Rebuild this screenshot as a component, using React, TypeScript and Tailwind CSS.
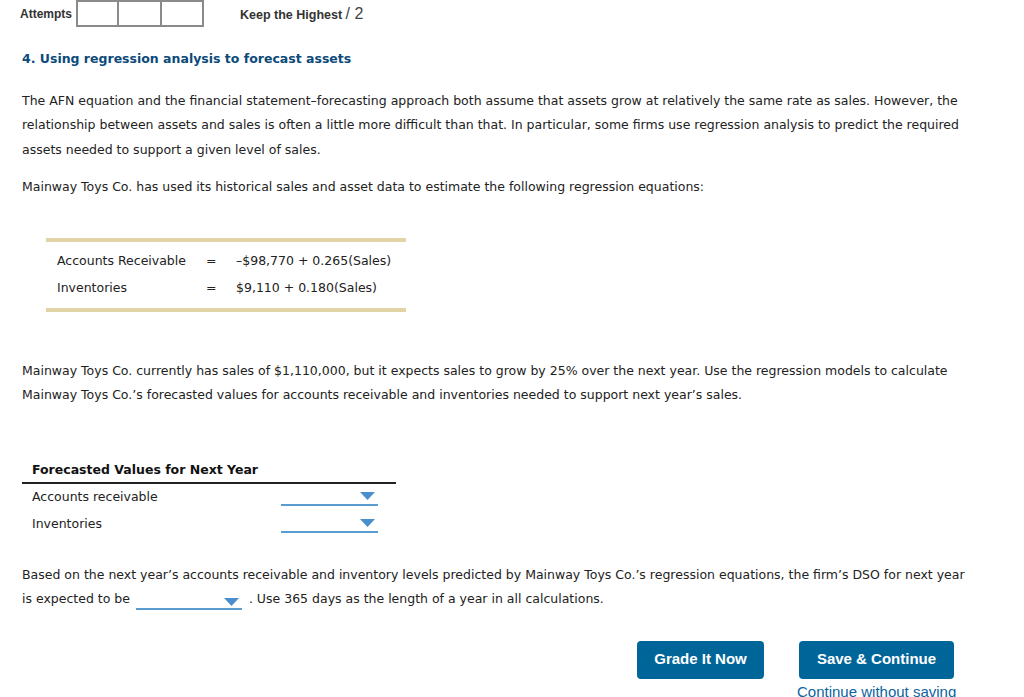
import { ReactNode } from 'react'

const verdana = { fontFamily: '"DejaVu Sans", Verdana, sans-serif' }

function Dropdown({ className = '' }: { className?: string }) {
  return (
    <span className={`inline-flex items-start justify-end border-b-2 border-[#5a9bd0] ${className}`}>
      <svg width="15" height="8" viewBox="0 0 15 8" className="mt-[4px] mr-[3px]">
        <polygon points="0,0 15,0 7.5,8" fill="#4a8fcb" />
      </svg>
    </span>
  )
}

function Para({ children, className = '' }: { children: ReactNode; className?: string }) {
  return <p className={`text-[12.5px] leading-[24.5px] text-[#222] ${className}`}>{children}</p>
}

function App() {
  return (
    <div className="min-h-screen bg-white relative" style={verdana}>
      {/* header */}
      <div className="flex items-start h-[27px] font-['Liberation_Sans',Arial,sans-serif]">
        <span className="ml-[20px] mt-[5px] text-[12px] font-bold text-[#333]">Attempts</span>
        <div className="flex ml-[4px]">
          <div className="w-[43px] h-[27px] border-2 border-[#8a8a8a]" />
          <div className="w-[43px] h-[27px] border-2 border-l-0 border-[#8a8a8a]" />
          <div className="w-[42px] h-[27px] border-2 border-l-0 border-[#8a8a8a]" />
        </div>
        <span className="ml-[36px] mt-[2px] text-[12.5px] font-bold text-[#333]">
          Keep the Highest <span className="font-normal text-[16px] text-[#444]">/ 2</span>
        </span>
      </div>

      <div className="pl-[22px] w-[972px]">
        <h2 className="mt-[23px] text-[12.5px] font-bold text-[#0b4a7a]">4. Using regression analysis to forecast assets</h2>

        <Para className="mt-[20px]">
          The AFN equation and the financial statement–forecasting approach both assume that assets grow at relatively the same rate as sales. However, the relationship between assets and sales is often a little more difficult than that. In particular, some firms use regression analysis to predict the required assets needed to support a given level of sales.
        </Para>
        <Para className="mt-[13px]">
          Mainway Toys Co. has used its historical sales and asset data to estimate the following regression equations:
        </Para>

        <div className="mt-[38px] ml-[24px] w-[360px] border-t-4 border-b-4 border-[#e0d4a6] pt-[5px] pb-[7px]">
          <div className="grid grid-cols-[149px_30px_1fr] text-[12.5px] text-[#222] leading-[27px] pl-[11px]">
            <span>Accounts Receivable</span>
            <span>=</span>
            <span>–$98,770 + 0.265(Sales)</span>
            <span>Inventories</span>
            <span>=</span>
            <span>$9,110 + 0.180(Sales)</span>
          </div>
        </div>

        <Para className="mt-[47px]">
          Mainway Toys Co. currently has sales of $1,110,000, but it expects sales to grow by 25% over the next year. Use the regression models to calculate Mainway Toys Co.’s forecasted values for accounts receivable and inventories needed to support next year’s sales.
        </Para>

        <div className="mt-[53px] w-[374px]">
          <div className="pl-[10px] pb-[2px] text-[12.5px] font-bold text-[#111] border-b-2 border-[#222]">Forecasted Values for Next Year</div>
          <div className="flex items-start h-[27px] pt-[4px] pl-[10px] text-[12.5px] text-[#222]">
            <span>Accounts receivable</span>
            <Dropdown className="ml-auto mr-[18px] w-[97px] h-[18px]" />
          </div>
          <div className="flex items-start h-[27px] pt-[4px] pl-[10px] text-[12.5px] text-[#222]">
            <span>Inventories</span>
            <Dropdown className="ml-auto mr-[18px] w-[97px] h-[18px]" />
          </div>
        </div>

        <Para className="mt-[25px]">
          Based on the next year’s accounts receivable and inventory levels predicted by Mainway Toys Co.’s regression equations, the firm’s DSO for next year is expected to be <Dropdown className="align-[-3px] w-[106px] h-[16px] ml-[2px] mr-[3px] leading-none" /> . Use 365 days as the length of a year in all calculations.
        </Para>
      </div>

      <div className="mt-[29px] flex justify-end pr-[70px] font-['Liberation_Sans',Arial,sans-serif]">
        <button className="w-[127px] h-[38px] rounded-[4px] bg-[#00669a] text-white text-[15px] font-bold">Grade It Now</button>
        <div className="ml-[35px] w-[155px] flex flex-col items-start">
          <button className="w-[155px] h-[38px] rounded-[4px] bg-[#00669a] text-white text-[15px] font-bold">Save &amp; Continue</button>
          <span className="mt-[4px] -ml-[2px] text-[15px] text-[#0b64a0] leading-[17px] whitespace-nowrap">Continue without saving</span>
        </div>
      </div>
    </div>
  )
}

export default App
